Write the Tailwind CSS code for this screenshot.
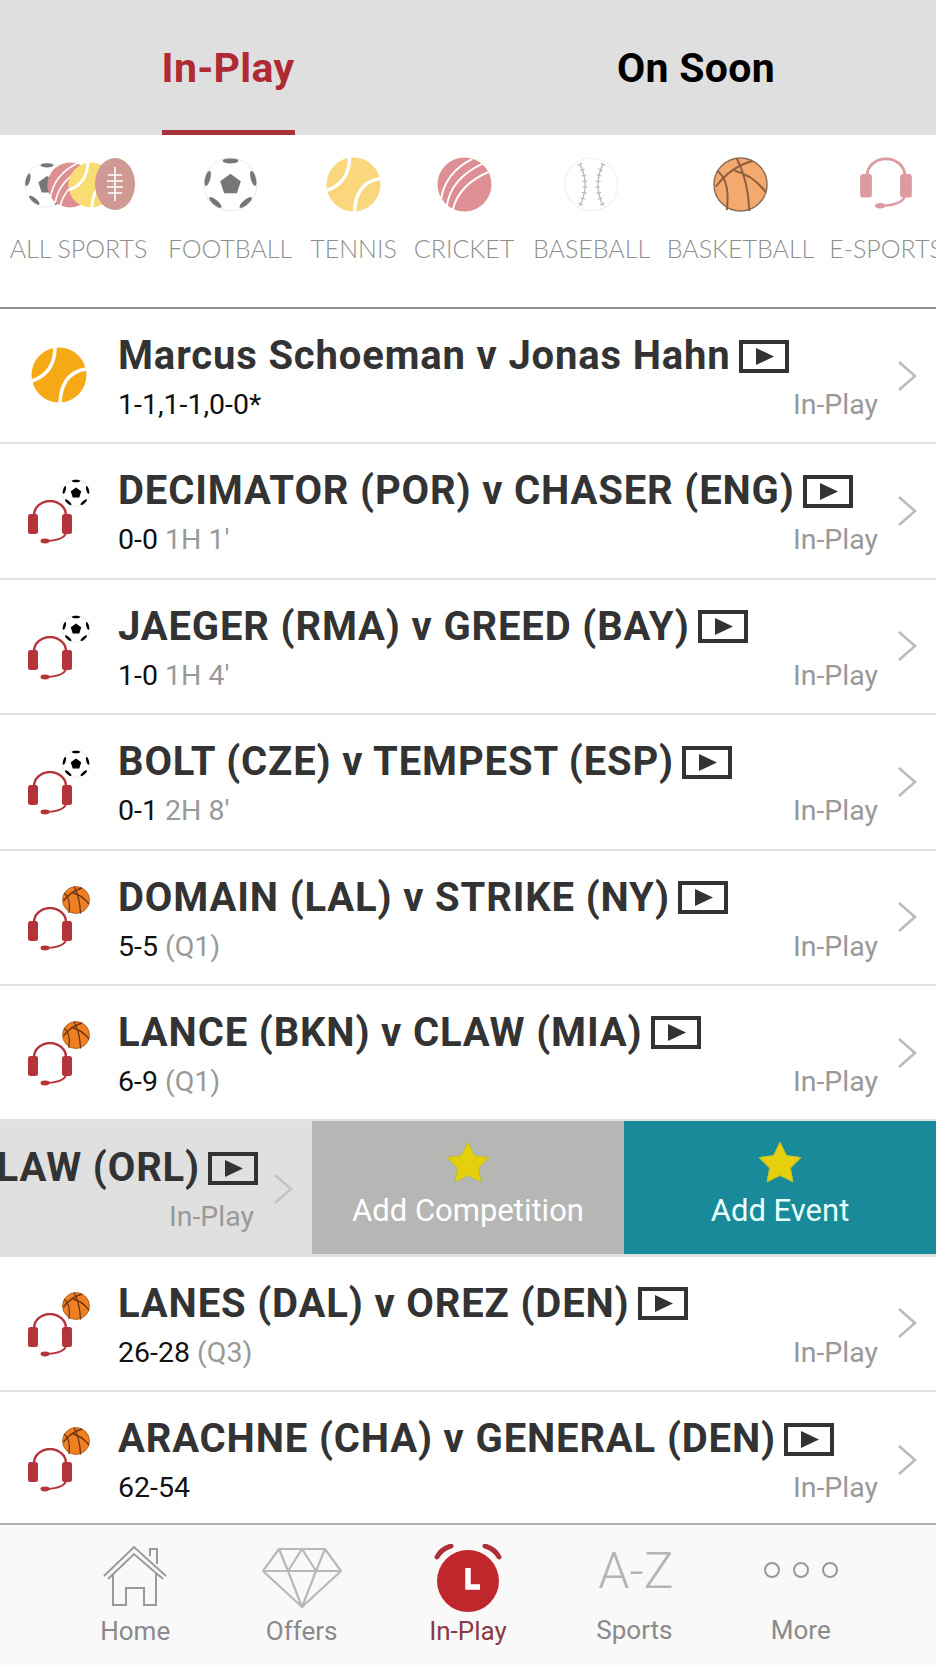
<!DOCTYPE html>
<html lang="en">
<head>
    <meta charset="UTF-8">
    <meta name="viewport" content="width=device-width, initial-scale=1.0">
    <title>In-Play</title>
    <script src="https://cdn.jsdelivr.net/npm/@tailwindcss/browser@4"></script>
</head>
<body class="bg-white font-['Roboto',sans-serif]">
    <!-- shared icons -->
    <svg class="hidden">
        <symbol id="soccer" viewBox="0 0 56 56">
            <circle cx="28" cy="28" r="27" fill="#fff" stroke="currentColor" stroke-opacity="0.18" stroke-width="1"/>
            <polygon points="28,17 38.5,24.6 34.5,37 21.5,37 17.5,24.6" fill="currentColor"/>
            <ellipse cx="28" cy="4" rx="8" ry="2.6" fill="currentColor"/>
            <ellipse cx="28" cy="4" rx="8" ry="2.6" fill="currentColor" transform="rotate(75 28 28)"/>
            <ellipse cx="28" cy="4" rx="8" ry="2.6" fill="currentColor" transform="rotate(-75 28 28)"/>
            <ellipse cx="28" cy="4" rx="8" ry="2.6" fill="currentColor" transform="rotate(140 28 28)"/>
            <ellipse cx="28" cy="4" rx="8" ry="2.6" fill="currentColor" transform="rotate(-140 28 28)"/>
        </symbol>
        <symbol id="tennis" viewBox="0 0 56 56">
            <circle cx="28" cy="28" r="27.5" fill="currentColor"/>
            <path d="M24 0 Q24 26 1 34 M55 22 Q30 26 29 56" fill="none" stroke="#fff" stroke-width="3.5"/>
        </symbol>
        <symbol id="cricket" viewBox="0 0 56 56">
            <circle cx="28" cy="28" r="27.5" fill="#dd8f93"/>
            <path d="M4 44 Q8 16 36 2 M10 50 Q14 22 46 7 M16 54 Q22 28 53 15" fill="none" stroke="#fff" stroke-width="2"/>
        </symbol>
        <symbol id="baseball" viewBox="0 0 56 56">
            <circle cx="28" cy="28" r="27" fill="#fff" stroke="#ececec" stroke-width="1"/>
            <path d="M16 7 Q27 28 16 50 M40 7 Q29 28 40 50" fill="none" stroke="#b4b4b4" stroke-width="1.2"/>
            <path d="M16 7 Q27 28 16 50 M40 7 Q29 28 40 50" fill="none" stroke="#b4b4b4" stroke-width="5" stroke-dasharray="1 5"/>
        </symbol>
        <symbol id="basketball" viewBox="0 0 56 56">
            <circle cx="28" cy="28" r="27" fill="#f4a96f" stroke="#8c6e58" stroke-width="1.5"/>
            <path d="M24 1 Q36 24 37 55 M14 54 Q18 24 4 14 M3 30 Q18 10 40 4 M22 14 Q40 18 54 36" fill="none" stroke="#8c5f3f" stroke-width="2"/>
        </symbol>
        <symbol id="basketball-dark" viewBox="0 0 56 56">
            <circle cx="28" cy="28" r="27" fill="#ee7f22" stroke="#a0561d" stroke-width="1.5"/>
            <path d="M24 1 Q36 24 37 55 M14 54 Q18 24 4 14 M3 30 Q18 10 40 4 M22 14 Q40 18 54 36" fill="none" stroke="#6d3413" stroke-width="2.6"/>
        </symbol>
        <symbol id="headset" viewBox="0 0 46 44">
            <path d="M7 17 V15 A16 14 0 0 1 39 15 V17" fill="none" stroke="currentColor" stroke-width="2.4"/>
            <rect x="1" y="14" width="10" height="20" rx="2.5" fill="currentColor"/>
            <rect x="35" y="14" width="10" height="20" rx="2.5" fill="currentColor"/>
            <path d="M39 33 Q37 40 20 41" fill="none" stroke="currentColor" stroke-width="2"/>
            <ellipse cx="18" cy="41" rx="4.5" ry="2.4" fill="currentColor"/>
        </symbol>
        <symbol id="play" viewBox="0 0 50 33">
            <rect x="2" y="2" width="46" height="29" fill="none" stroke="currentColor" stroke-width="4"/>
            <polygon points="17,8 17,25 35,16.5" fill="currentColor"/>
        </symbol>
        <symbol id="chevron" viewBox="0 0 20 32">
            <polyline points="2,2 18,16 2,30" fill="none" stroke="currentColor" stroke-width="2.6"/>
        </symbol>
        <symbol id="star" viewBox="0 0 44 42">
            <polygon points="22,1 28.5,14.5 43,16.5 32.5,27 35,41 22,34.5 9,41 11.5,27 1,16.5 15.5,14.5" fill="#e6cf0c" stroke="#b8c030" stroke-width="1"/>
        </symbol>
    </svg>

    <div class="w-[936px] h-[1665px] overflow-hidden flex flex-col">
        <!-- tabs -->
        <div class="h-[135px] bg-[#dfdfdf] grid grid-cols-[456px_480px] shrink-0">
            <div class="flex justify-center">
                <div class="h-full w-[133px] border-b-[5px] border-[#a8323a] flex items-center justify-center text-[41px] tracking-[0.3px] font-bold text-[#b02a34] pt-[8px] whitespace-nowrap">In-Play</div>
            </div>
            <div class="flex items-center justify-center text-[41px] tracking-[0.3px] font-bold text-black pt-[3px]">On Soon</div>
        </div>

        <!-- sport filter -->
        <div class="h-[174px] border-b-2 border-[#8e8e8e] shrink-0 overflow-hidden flex pl-[9px] gap-[19px] pt-[22px] font-['Lato',sans-serif] font-light text-[25px] text-[#8f8f8f] whitespace-nowrap">
            <div class="w-[139px] shrink-0 flex flex-col items-center">
                <svg class="w-[112px] h-[55px]" viewBox="0 0 112 55">
                    <use href="#soccer" x="1" y="5" width="46" height="46" class="text-[#777]"/>
                    <use href="#cricket" x="24" y="5" width="46" height="46"/>
                    <use href="#tennis" x="45" y="5" width="46" height="46" class="text-[#f8dd72]"/>
                    <ellipse cx="92" cy="27" rx="20" ry="26" fill="#cf9a93"/>
                    <path d="M92 10 V44 M85 18 H99 M84 24 H100 M84 30 H100 M85 36 H99" stroke="#fff" stroke-width="1.6"/>
                </svg>
                <span class="mt-[20px] leading-[32px]">ALL SPORTS</span>
            </div>
            <div class="w-[126px] shrink-0 flex flex-col items-center">
                <svg class="w-[55px] h-[55px] text-[#777]"><use href="#soccer"/></svg>
                <span class="mt-[20px] leading-[32px]">FOOTBALL</span>
            </div>
            <div class="w-[83px] shrink-0 flex flex-col items-center">
                <svg class="w-[55px] h-[55px] text-[#fad67c]"><use href="#tennis"/></svg>
                <span class="mt-[20px] leading-[32px]">TENNIS</span>
            </div>
            <div class="w-[100px] shrink-0 flex flex-col items-center">
                <svg class="w-[55px] h-[55px]"><use href="#cricket"/></svg>
                <span class="mt-[20px] leading-[32px]">CRICKET</span>
            </div>
            <div class="w-[117px] shrink-0 flex flex-col items-center">
                <svg class="w-[55px] h-[55px]"><use href="#baseball"/></svg>
                <span class="mt-[20px] leading-[32px]">BASEBALL</span>
            </div>
            <div class="w-[143px] shrink-0 flex flex-col items-center">
                <svg class="w-[55px] h-[55px]"><use href="#basketball"/></svg>
                <span class="mt-[20px] leading-[32px]">BASKETBALL</span>
            </div>
            <div class="w-[110px] shrink-0 flex flex-col items-center">
                <svg class="w-[54px] h-[53px] text-[#dd9aa0]"><use href="#headset"/></svg>
                <span class="mt-[22px] leading-[32px]">E-SPORTS</span>
            </div>
        </div>

        <!-- events -->
        <div class="flex-1 min-h-0 overflow-hidden">
            <div class="h-[135.4px] border-b-2 border-[#e2e2e2] flex">
                <div class="w-[118px] shrink-0 relative">
                    <svg class="absolute left-[31px] top-[38px] w-[56px] h-[56px] text-[#f5a915]"><use href="#tennis"/></svg>
                </div>
                <div class="flex-1 min-w-0 pt-[25px]">
                    <div class="flex items-center gap-[8px] text-[40px] tracking-[0.85px] leading-[44px] font-bold text-[#333] whitespace-nowrap">Marcus Schoeman v Jonas Hahn<svg class="w-[50px] h-[33px] text-[#333]"><use href="#play"/></svg></div>
                    <div class="mt-[11px] flex justify-between text-[28.5px] leading-[32px]"><span class="text-[#111]">1-1,1-1,0-0*</span><span class="text-[#999]">In-Play</span></div>
                </div>
                <div class="w-[58px] shrink-0 flex items-center justify-end pr-[19px]"><svg class="w-[20px] h-[32px] text-[#bbb]"><use href="#chevron"/></svg></div>
            </div>

            <div class="h-[135.4px] border-b-2 border-[#e2e2e2] flex">
                <div class="w-[118px] shrink-0 relative">
                    <svg class="absolute left-[27px] top-[56px] w-[46px] h-[44px] text-[#b5333b]"><use href="#headset"/></svg>
                    <svg class="absolute left-[62px] top-[35px] w-[28px] h-[28px] text-black"><use href="#soccer"/></svg>
                </div>
                <div class="flex-1 min-w-0 pt-[25px]">
                    <div class="flex items-center gap-[8px] text-[40px] tracking-[0.85px] leading-[44px] font-bold text-[#333] whitespace-nowrap">DECIMATOR (POR) v CHASER (ENG)<svg class="w-[50px] h-[33px] text-[#333]"><use href="#play"/></svg></div>
                    <div class="mt-[11px] flex justify-between text-[28.5px] leading-[32px]"><span class="text-[#111]">0-0 <span class="text-[#999]">1H 1'</span></span><span class="text-[#999]">In-Play</span></div>
                </div>
                <div class="w-[58px] shrink-0 flex items-center justify-end pr-[19px]"><svg class="w-[20px] h-[32px] text-[#bbb]"><use href="#chevron"/></svg></div>
            </div>

            <div class="h-[135.4px] border-b-2 border-[#e2e2e2] flex">
                <div class="w-[118px] shrink-0 relative">
                    <svg class="absolute left-[27px] top-[56px] w-[46px] h-[44px] text-[#b5333b]"><use href="#headset"/></svg>
                    <svg class="absolute left-[62px] top-[35px] w-[28px] h-[28px] text-black"><use href="#soccer"/></svg>
                </div>
                <div class="flex-1 min-w-0 pt-[25px]">
                    <div class="flex items-center gap-[8px] text-[40px] tracking-[0.85px] leading-[44px] font-bold text-[#333] whitespace-nowrap">JAEGER (RMA) v GREED (BAY)<svg class="w-[50px] h-[33px] text-[#333]"><use href="#play"/></svg></div>
                    <div class="mt-[11px] flex justify-between text-[28.5px] leading-[32px]"><span class="text-[#111]">1-0 <span class="text-[#999]">1H 4'</span></span><span class="text-[#999]">In-Play</span></div>
                </div>
                <div class="w-[58px] shrink-0 flex items-center justify-end pr-[19px]"><svg class="w-[20px] h-[32px] text-[#bbb]"><use href="#chevron"/></svg></div>
            </div>

            <div class="h-[135.4px] border-b-2 border-[#e2e2e2] flex">
                <div class="w-[118px] shrink-0 relative">
                    <svg class="absolute left-[27px] top-[56px] w-[46px] h-[44px] text-[#b5333b]"><use href="#headset"/></svg>
                    <svg class="absolute left-[62px] top-[35px] w-[28px] h-[28px] text-black"><use href="#soccer"/></svg>
                </div>
                <div class="flex-1 min-w-0 pt-[25px]">
                    <div class="flex items-center gap-[8px] text-[40px] tracking-[0.85px] leading-[44px] font-bold text-[#333] whitespace-nowrap">BOLT (CZE) v TEMPEST (ESP)<svg class="w-[50px] h-[33px] text-[#333]"><use href="#play"/></svg></div>
                    <div class="mt-[11px] flex justify-between text-[28.5px] leading-[32px]"><span class="text-[#111]">0-1 <span class="text-[#999]">2H 8'</span></span><span class="text-[#999]">In-Play</span></div>
                </div>
                <div class="w-[58px] shrink-0 flex items-center justify-end pr-[19px]"><svg class="w-[20px] h-[32px] text-[#bbb]"><use href="#chevron"/></svg></div>
            </div>

            <div class="h-[135.4px] border-b-2 border-[#e2e2e2] flex">
                <div class="w-[118px] shrink-0 relative">
                    <svg class="absolute left-[27px] top-[56px] w-[46px] h-[44px] text-[#b5333b]"><use href="#headset"/></svg>
                    <svg class="absolute left-[62px] top-[35px] w-[28px] h-[28px]"><use href="#basketball-dark"/></svg>
                </div>
                <div class="flex-1 min-w-0 pt-[25px]">
                    <div class="flex items-center gap-[8px] text-[40px] tracking-[0.85px] leading-[44px] font-bold text-[#333] whitespace-nowrap">DOMAIN (LAL) v STRIKE (NY)<svg class="w-[50px] h-[33px] text-[#333]"><use href="#play"/></svg></div>
                    <div class="mt-[11px] flex justify-between text-[28.5px] leading-[32px]"><span class="text-[#111]">5-5 <span class="text-[#999]">(Q1)</span></span><span class="text-[#999]">In-Play</span></div>
                </div>
                <div class="w-[58px] shrink-0 flex items-center justify-end pr-[19px]"><svg class="w-[20px] h-[32px] text-[#bbb]"><use href="#chevron"/></svg></div>
            </div>

            <div class="h-[135.4px] border-b-2 border-[#e2e2e2] flex">
                <div class="w-[118px] shrink-0 relative">
                    <svg class="absolute left-[27px] top-[56px] w-[46px] h-[44px] text-[#b5333b]"><use href="#headset"/></svg>
                    <svg class="absolute left-[62px] top-[35px] w-[28px] h-[28px]"><use href="#basketball-dark"/></svg>
                </div>
                <div class="flex-1 min-w-0 pt-[25px]">
                    <div class="flex items-center gap-[8px] text-[40px] tracking-[0.85px] leading-[44px] font-bold text-[#333] whitespace-nowrap">LANCE (BKN) v CLAW (MIA)<svg class="w-[50px] h-[33px] text-[#333]"><use href="#play"/></svg></div>
                    <div class="mt-[11px] flex justify-between text-[28.5px] leading-[32px]"><span class="text-[#111]">6-9 <span class="text-[#999]">(Q1)</span></span><span class="text-[#999]">In-Play</span></div>
                </div>
                <div class="w-[58px] shrink-0 flex items-center justify-end pr-[19px]"><svg class="w-[20px] h-[32px] text-[#bbb]"><use href="#chevron"/></svg></div>
            </div>

            <!-- row swiped open -->
            <div class="h-[135.4px] flex items-start bg-[#e0e0e0]">
                <div class="w-[312px] h-full shrink-0 overflow-hidden flex justify-end">
                    <div class="shrink-0 flex flex-col items-end pt-[25px]">
                        <div class="flex items-center gap-[8px] text-[40px] tracking-[0.85px] leading-[44px] font-bold text-[#333] whitespace-nowrap pr-[15px]">LAW (ORL)<svg class="w-[50px] h-[33px] text-[#333]"><use href="#play"/></svg></div>
                        <div class="mt-[11px] text-[28.5px] leading-[32px] pr-[19px] text-[#999]">In-Play</div>
                    </div>
                    <div class="w-[39px] shrink-0 flex items-center justify-end pr-[19px]"><svg class="w-[20px] h-[32px] text-[#c4c4c4]"><use href="#chevron"/></svg></div>
                </div>
                <div class="w-[312px] h-[133px] shrink-0 bg-[#b6b6b4] flex flex-col items-center pt-[20px] text-[31px] leading-[36px] text-white">
                    <svg class="w-[44px] h-[42px]"><use href="#star"/></svg>
                    <span class="mt-[10px]">Add Competition</span>
                </div>
                <div class="w-[312px] h-[133px] shrink-0 bg-[#188a9a] flex flex-col items-center pt-[20px] text-[31px] leading-[36px] text-[#eaffff]">
                    <svg class="w-[44px] h-[42px]"><use href="#star"/></svg>
                    <span class="mt-[10px]">Add Event</span>
                </div>
            </div>

            <div class="h-[135.4px] border-b-2 border-[#e2e2e2] flex">
                <div class="w-[118px] shrink-0 relative">
                    <svg class="absolute left-[27px] top-[56px] w-[46px] h-[44px] text-[#b5333b]"><use href="#headset"/></svg>
                    <svg class="absolute left-[62px] top-[35px] w-[28px] h-[28px]"><use href="#basketball-dark"/></svg>
                </div>
                <div class="flex-1 min-w-0 pt-[25px]">
                    <div class="flex items-center gap-[8px] text-[40px] tracking-[0.85px] leading-[44px] font-bold text-[#333] whitespace-nowrap">LANES (DAL) v OREZ (DEN)<svg class="w-[50px] h-[33px] text-[#333]"><use href="#play"/></svg></div>
                    <div class="mt-[11px] flex justify-between text-[28.5px] leading-[32px]"><span class="text-[#111]">26-28 <span class="text-[#999]">(Q3)</span></span><span class="text-[#999]">In-Play</span></div>
                </div>
                <div class="w-[58px] shrink-0 flex items-center justify-end pr-[19px]"><svg class="w-[20px] h-[32px] text-[#bbb]"><use href="#chevron"/></svg></div>
            </div>

            <div class="h-[135.4px] flex">
                <div class="w-[118px] shrink-0 relative">
                    <svg class="absolute left-[27px] top-[56px] w-[46px] h-[44px] text-[#b5333b]"><use href="#headset"/></svg>
                    <svg class="absolute left-[62px] top-[35px] w-[28px] h-[28px]"><use href="#basketball-dark"/></svg>
                </div>
                <div class="flex-1 min-w-0 pt-[25px]">
                    <div class="flex items-center gap-[8px] text-[40px] tracking-[0.85px] leading-[44px] font-bold text-[#333] whitespace-nowrap">ARACHNE (CHA) v GENERAL (DEN)<svg class="w-[50px] h-[33px] text-[#333]"><use href="#play"/></svg></div>
                    <div class="mt-[11px] flex justify-between text-[28.5px] leading-[32px]"><span class="text-[#111]">62-54</span><span class="text-[#999]">In-Play</span></div>
                </div>
                <div class="w-[58px] shrink-0 flex items-center justify-end pr-[19px]"><svg class="w-[20px] h-[32px] text-[#bbb]"><use href="#chevron"/></svg></div>
            </div>
        </div>

        <!-- bottom nav -->
        <div class="h-[142px] shrink-0 border-t-2 border-[#b0b0b0] bg-[#f9f9f9] grid grid-cols-5 px-[52px] text-[26px] leading-[30px] text-[#8a8a8a]">
            <div class="flex flex-col items-center pt-[20px]">
                <svg class="w-[64px] h-[62px]" viewBox="0 0 64 62" fill="none" stroke="#9a9a9a" stroke-width="2">
                    <path d="M1 31 L31 2 L63 31 M5 34 L31 9 L60 34"/>
                    <path d="M10 29 V60 H23 V43 H41 V60 H53 V29"/>
                    <path d="M47 11 V4 H54 V19"/>
                </svg>
                <span class="mt-[9px]">Home</span>
            </div>
            <div class="flex flex-col items-center pt-[22px]">
                <svg class="w-[82px] h-[62px]" viewBox="0 0 82 62" fill="none" stroke="#b8b8b8" stroke-width="2.2" stroke-linejoin="round">
                    <path d="M18 2 L2 24 L41 60 L80 24 L64 2 Z M2 24 H80"/>
                    <path d="M18 2 L27 24 L41 60 L55 24 L64 2 M27 24 L41 2 L55 24"/>
                </svg>
                <span class="mt-[7px]">Offers</span>
            </div>
            <div class="flex flex-col items-center pt-[19px]">
                <svg class="w-[72px] h-[68px]" viewBox="0 0 72 68" fill="none">
                    <circle cx="36" cy="37" r="31" fill="#c0272d"/>
                    <path d="M5 13 Q9 5 19 2 M67 13 Q63 5 53 2" stroke="#ad3037" stroke-width="5" stroke-linecap="round"/>
                    <path d="M36 24 V43 H48" stroke="#fff" stroke-width="5.5"/>
                </svg>
                <span class="mt-[4px] text-[#8a3a42]">In-Play</span>
            </div>
            <div class="flex flex-col items-center pt-[15px]">
                <div class="h-[62px] pl-[3px] text-[50px] leading-[62px] font-light text-[#b5b5b5]">A-Z</div>
                <span class="mt-[13px]">Sports</span>
            </div>
            <div class="flex flex-col items-center pt-[37px]">
                <div class="flex gap-[13px] h-[40px]">
                    <div class="w-[16px] h-[16px] rounded-full border-2 border-[#999]"></div>
                    <div class="w-[16px] h-[16px] rounded-full border-2 border-[#999]"></div>
                    <div class="w-[16px] h-[16px] rounded-full border-2 border-[#999]"></div>
                </div>
                <span class="mt-[13px]">More</span>
            </div>
        </div>
    </div>
</body>
</html>
